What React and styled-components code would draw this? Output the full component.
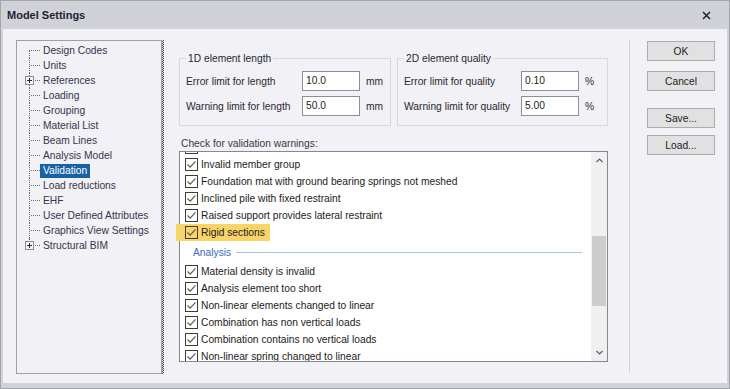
import styled, { createGlobalStyle } from "styled-components";

const GlobalStyle = createGlobalStyle`
  html, body {
    margin: 0;
    padding: 0;
    background: #ffffff;
  }
  * {
    box-sizing: border-box;
  }
`;

const Window = styled.div`
  width: 730px;
  height: 389px;
  border: 1px solid #a3a5ab;
  background: #d0d2d7;
  display: flex;
  flex-direction: column;
  font-family: "Liberation Sans", Arial, sans-serif;
  font-size: 10.25px;
  color: #1e1e1e;
`;

const TitleBar = styled.div`
  height: 28px;
  flex: none;
  display: flex;
  align-items: center;
  justify-content: space-between;
  padding: 0 18px 0 6px;
`;

const Title = styled.span`
  font-size: 11px;
  font-weight: 700;
  color: #1f2230;
`;

const Body = styled.div`
  height: 354px;
  margin: 0 2px;
  background: #f1f1f6;
  display: flex;
  align-items: flex-start;
  padding: 11px 0 0 13px;
`;

const Tree = styled.div`
  width: 146px;
  height: 334px;
  flex: none;
  border: 1px solid #a0a1a8;
  padding: 2px 0 0 12px;
  color: #34364a;
`;

const TreeRow = styled.div`
  height: 15px;
  display: flex;
  align-items: center;
`;

const Connector = styled.span`
  position: relative;
  width: 11px;
  height: 15px;
  flex: none;

  &::before {
    content: "";
    position: absolute;
    left: 0;
    top: ${({ $first }) => ($first ? "7px" : "0")};
    bottom: ${({ $last }) => ($last ? "7px" : "0")};
    border-left: 1px dotted #6b6b72;
  }

  &::after {
    content: "";
    position: absolute;
    left: 2px;
    right: 0;
    top: 7px;
    border-top: 1px dotted #6b6b72;
  }
`;

const Expander = styled.svg`
  position: absolute;
  left: -4px;
  top: 3px;
  z-index: 1;
`;

const TreeLabel = styled.span`
  height: 14px;
  line-height: 14px;
  padding: 0 3px;
  white-space: nowrap;
  background: ${({ $selected }) => ($selected ? "#1662a5" : "transparent")};
  color: ${({ $selected }) => ($selected ? "#ffffff" : "inherit")};
`;

const Splitter = styled.div`
  width: 2px;
  height: 334px;
  flex: none;
  background-image: conic-gradient(#4a4a50 25%, #e4e4ea 0 50%, #4a4a50 0 75%, #e4e4ea 0);
  background-size: 2px 2px;
`;

const Main = styled.div`
  width: 429px;
  flex: none;
  margin-left: 15px;
  padding-top: 12px;
`;

const GroupRow = styled.div`
  display: flex;
  gap: 6px;
`;

const GroupBox = styled.fieldset`
  width: ${({ $width }) => $width}px;
  margin: 0;
  border: 1px solid #d8d8de;
  padding: 6px 0 9px 6px;
  min-width: 0;
`;

const Legend = styled.legend`
  padding: 0 2px;
  line-height: 13px;
  color: #2a2a30;
`;

const FieldGrid = styled.div`
  display: grid;
  grid-template-columns: ${({ $labelWidth }) => $labelWidth}px 58px max-content;
  grid-auto-rows: 20px;
  row-gap: 5px;
  column-gap: 6px;
  align-items: center;
`;

const FieldLabel = styled.span`
  color: #2a2a30;
  white-space: nowrap;
  overflow: hidden;
`;

const NumberInput = styled.div`
  width: 58px;
  height: 20px;
  border: 1px solid #8e8f96;
  background: #ffffff;
  padding: 0 3px;
  line-height: 18px;
  color: #222;
`;

const Unit = styled.span`
  color: #2a2a30;
`;

const SectionLabel = styled.div`
  margin-top: 11px;
  padding-left: 2px;
  line-height: 13px;
  color: #3a3a42;
`;

const ListBox = styled.div`
  margin-top: 1px;
  width: 429px;
  height: 211px;
  border: 1px solid #858891;
  background: #ffffff;
  display: flex;
`;

const Viewport = styled.div`
  flex: 1;
  min-width: 0;
  clip-path: inset(0 0 0 -6px);
`;

const PartialRow = styled.div`
  height: 4px;
  overflow: hidden;
  display: flex;
  flex-direction: column;
  justify-content: flex-end;
`;

const Row = styled.div`
  position: relative;
  height: 17px;
  flex: none;
  display: flex;
  align-items: center;
  gap: 3px;
  padding-left: 5px;
  white-space: nowrap;
  color: #1c1c1c;

  &::before {
    content: "";
    display: ${({ $highlight }) => ($highlight ? "block" : "none")};
    position: absolute;
    left: -4px;
    top: 0;
    width: 94px;
    height: 17px;
    background: #f9d468;
    z-index: -1;
  }
`;

const Check = styled.span`
  width: 13px;
  height: 13px;
  flex: none;
  border: 1px solid #3c3c3c;
  display: flex;
  align-items: center;
  justify-content: center;
`;

const GroupHeader = styled.div`
  height: 22px;
  display: flex;
  align-items: center;
  gap: 5px;
  padding: 0 9px 0 13px;
  color: #3b6cc2;

  &::after {
    content: "";
    flex: 1;
    height: 1px;
    background: #a9c1ea;
  }
`;

const ScrollBar = styled.div`
  width: 16px;
  flex: none;
  background: #f0f0f0;
  display: flex;
  flex-direction: column;
`;

const ScrollArrow = styled.div`
  height: 17px;
  flex: none;
  display: flex;
  align-items: center;
  justify-content: center;
`;

const ScrollTrack = styled.div`
  flex: 1;
`;

const Thumb = styled.div`
  margin: ${({ $offset }) => $offset}px 1px 0;
  height: ${({ $size }) => $size}px;
  background: #cdcdcd;
`;

const RightSeparator = styled.div`
  width: 1px;
  height: 333px;
  flex: none;
  margin-left: 21px;
  background: #d2d2d8;
`;

const ButtonColumn = styled.div`
  margin-left: 17px;
  padding-top: 1px;
  display: flex;
  flex-direction: column;
`;

const Button = styled.button`
  width: 68px;
  height: 20px;
  margin-top: ${({ $gap }) => $gap || 0}px;
  border: 1px solid #adadad;
  background: #e1e1e1;
  font: inherit;
  color: #1e1e1e;
  padding: 0;
`;

const BottomFrame = styled.div`
  flex: 1;
`;

function CloseIcon() {
  return (
    <svg width="9" height="9" viewBox="0 0 9 9">
      <path d="M1 1 L8 8 M8 1 L1 8" stroke="#1f2230" strokeWidth="1.5" />
    </svg>
  );
}

function PlusBox() {
  return (
    <Expander width="9" height="9" viewBox="0 0 9 9">
      <rect x="0.5" y="0.5" width="8" height="8" fill="#f4f4f8" stroke="#8d8f98" />
      <path d="M2 4.5 H7 M4.5 2 V7" stroke="#2a2a36" strokeWidth="1" />
    </Expander>
  );
}

function CheckMark() {
  return (
    <svg width="11" height="11" viewBox="0 0 11 11">
      <path d="M1.5 5.5 L4.2 8.2 L9.5 2.3" fill="none" stroke="#5a5a5a" strokeWidth="1.2" />
    </svg>
  );
}

function Chevron({ up }) {
  return (
    <svg width="7" height="5" viewBox="0 0 7 5">
      <path
        d={up ? "M0.5 4 L3.5 1 L6.5 4" : "M0.5 1 L3.5 4 L6.5 1"}
        fill="none"
        stroke="#606060"
        strokeWidth="1.2"
      />
    </svg>
  );
}

const treeItems = [
  { label: "Design Codes" },
  { label: "Units" },
  { label: "References", expandable: true },
  { label: "Loading" },
  { label: "Grouping" },
  { label: "Material List" },
  { label: "Beam Lines" },
  { label: "Analysis Model" },
  { label: "Validation", selected: true },
  { label: "Load reductions" },
  { label: "EHF" },
  { label: "User Defined Attributes" },
  { label: "Graphics View Settings" },
  { label: "Structural BIM", expandable: true },
];

const validationRows = [
  { type: "item", label: "Invalid member group" },
  { type: "item", label: "Foundation mat with ground bearing springs not meshed" },
  { type: "item", label: "Inclined pile with fixed restraint" },
  { type: "item", label: "Raised support provides lateral restraint" },
  { type: "item", label: "Rigid sections", highlight: true },
  { type: "header", label: "Analysis" },
  { type: "item", label: "Material density is invalid" },
  { type: "item", label: "Analysis element too short" },
  { type: "item", label: "Non-linear elements changed to linear" },
  { type: "item", label: "Combination has non vertical loads" },
  { type: "item", label: "Combination contains no vertical loads" },
  { type: "item", label: "Non-linear spring changed to linear" },
];

function LimitGroup({ title, width, labelWidth, unit, fields }) {
  return (
    <GroupBox $width={width}>
      <Legend>{title}</Legend>
      <FieldGrid $labelWidth={labelWidth}>
        {fields.map(([label, value]) => [
          <FieldLabel key={label}>{label}</FieldLabel>,
          <NumberInput key={label + "-v"}>{value}</NumberInput>,
          <Unit key={label + "-u"}>{unit}</Unit>,
        ])}
      </FieldGrid>
    </GroupBox>
  );
}

export default function App() {
  return (
    <>
      <GlobalStyle />
      <Window>
        <TitleBar>
          <Title>Model Settings</Title>
          <CloseIcon />
        </TitleBar>

        <Body>
          <Tree>
            {treeItems.map((item, i) => (
              <TreeRow key={item.label}>
                <Connector $first={i === 0} $last={i === treeItems.length - 1}>
                  {item.expandable && <PlusBox />}
                </Connector>
                <TreeLabel $selected={item.selected}>{item.label}</TreeLabel>
              </TreeRow>
            ))}
          </Tree>
          <Splitter />

          <Main>
            <GroupRow>
              <LimitGroup
                title="1D element length"
                width={212}
                labelWidth={110}
                unit="mm"
                fields={[
                  ["Error limit for length", "10.0"],
                  ["Warning limit for length", "50.0"],
                ]}
              />
              <LimitGroup
                title="2D element quality"
                width={211}
                labelWidth={111}
                unit="%"
                fields={[
                  ["Error limit for quality", "0.10"],
                  ["Warning limit for quality", "5.00"],
                ]}
              />
            </GroupRow>

            <SectionLabel>Check for validation warnings:</SectionLabel>
            <ListBox>
              <Viewport>
                <PartialRow>
                  <Row>
                    <Check>
                      <CheckMark />
                    </Check>
                  </Row>
                </PartialRow>
                {validationRows.map((row) =>
                  row.type === "header" ? (
                    <GroupHeader key={row.label}>{row.label}</GroupHeader>
                  ) : (
                    <Row key={row.label} $highlight={row.highlight}>
                      <Check>
                        <CheckMark />
                      </Check>
                      {row.label}
                    </Row>
                  ),
                )}
              </Viewport>
              <ScrollBar>
                <ScrollArrow>
                  <Chevron up />
                </ScrollArrow>
                <ScrollTrack>
                  <Thumb $offset={67} $size={70} />
                </ScrollTrack>
                <ScrollArrow>
                  <Chevron />
                </ScrollArrow>
              </ScrollBar>
            </ListBox>
          </Main>

          <RightSeparator />
          <ButtonColumn>
            <Button>OK</Button>
            <Button $gap={10}>Cancel</Button>
            <Button $gap={17}>Save...</Button>
            <Button $gap={7}>Load...</Button>
          </ButtonColumn>
        </Body>
        <BottomFrame />
      </Window>
    </>
  );
}
